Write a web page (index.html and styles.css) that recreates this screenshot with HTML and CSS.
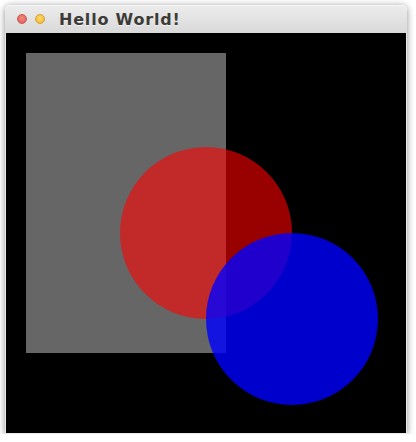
FILE: index.html
```html
<!DOCTYPE html>
<html>
<head>
<meta charset="utf-8">
<link rel="stylesheet" href="styles.css">
</head>
<body>
<div class="window">
  <div class="titlebar">
    <span class="btn close"></span>
    <span class="btn minimize"></span>
    <span class="title">Hello World!</span>
  </div>
  <div class="canvas">
    <svg width="400" height="400" viewBox="0 0 400 400">
      <rect x="0" y="0" width="400" height="400" fill="#000"/>
      <rect x="20" y="20" width="200" height="300" fill="#666666"/>
      <circle cx="200" cy="200" r="86" fill="rgb(255,0,0)" fill-opacity="0.6"/>
      <circle cx="286" cy="286" r="86" fill="rgb(0,0,255)" fill-opacity="0.8"/>
    </svg>
  </div>
</div>
</body>
</html>
```
FILE: styles.css
```css
html, body {
  margin: 0;
  padding: 0;
  background: #ffffff;
}
body {
  padding: 5px 0 0 5px;
}
.window {
  width: 402px;
  border-radius: 5px 5px 0 0;
  box-shadow: 0 1px 7px rgba(0, 0, 0, 0.45);
  background: #e6e6e6;
}
.titlebar {
  height: 28px;
  display: flex;
  align-items: center;
  padding-left: 12px;
  border-radius: 5px 5px 0 0;
  background: linear-gradient(#ececec, #d9d9d9);
  box-shadow: inset 0 1px 0 #f6f6f6;
}
.btn {
  width: 10px;
  height: 10px;
  border-radius: 50%;
  margin-right: 8px;
  box-sizing: border-box;
}
.close {
  background: radial-gradient(circle at 50% 40%, #f08a80, #de5a52);
  border: 1px solid #c8564e;
}
.minimize {
  background: radial-gradient(circle at 50% 40%, #ffd76a, #f2b632);
  border: 1px solid #d6a030;
}
.title {
  margin-left: 6px;
  font-family: "DejaVu Sans", "Liberation Sans", sans-serif;
  font-weight: bold;
  font-size: 16px;
  letter-spacing: 0.8px;
  color: #3c3b37;
  text-shadow: 0 1px 0 rgba(255, 255, 255, 0.6);
}
.canvas {
  padding: 0 1px 1px 1px;
  background: #e8e8e8;
  line-height: 0;
}
.canvas svg {
  display: block;
}
```
